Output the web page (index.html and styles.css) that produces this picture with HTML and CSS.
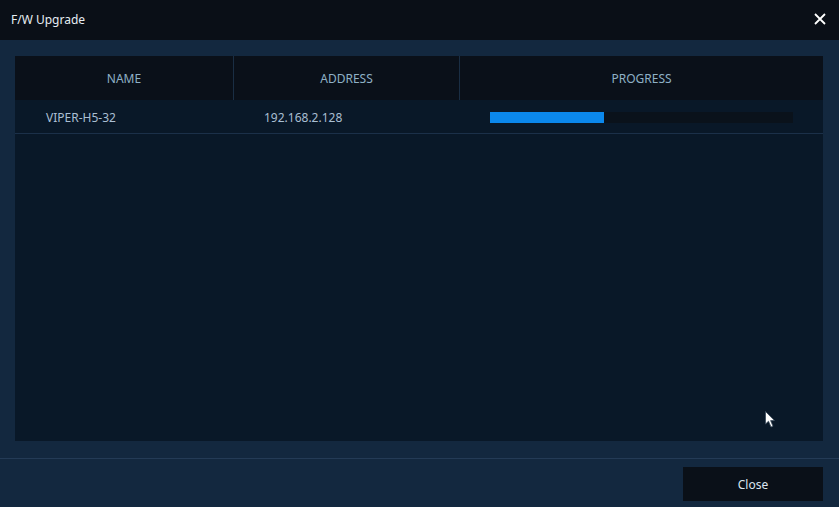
FILE: index.html
```html
<!DOCTYPE html>
<html>
<head>
<meta charset="utf-8">
<link rel="stylesheet" href="styles.css">
</head>
<body>
<div class="dialog">
  <div class="titlebar">
    <span class="title">F/W Upgrade</span>
    <svg class="close-x" width="14" height="14" viewBox="0 0 14 14"><path d="M2 2L12 12M12 2L2 12" stroke="#ffffff" stroke-width="1.8" fill="none"/></svg>
  </div>
  <div class="content">
    <div class="panel">
      <div class="row head">
        <div class="cell c1">NAME</div>
        <div class="cell c2">ADDRESS</div>
        <div class="cell c3">PROGRESS</div>
      </div>
      <div class="row item">
        <div class="cell c1 name">VIPER-H5-32</div>
        <div class="cell c2 addr">192.168.2.128</div>
        <div class="cell c3 prog"><div class="bar"><div class="fill" style="width:37.6%"></div></div></div>
      </div>
    </div>
  </div>
  <div class="footer">
    <button class="btn">Close</button>
  </div>
  <svg class="cursor" width="12" height="18" viewBox="0 0 12 18"><path d="M0.5 0.5L0.5 13L3.5 10.2L6 16L8 15.2L5.6 9.6L9.5 9.6Z" fill="#ffffff" stroke="#3a4a5a" stroke-width="0.8"/></svg>
</div>
</body>
</html>
```
FILE: styles.css
```css
* { box-sizing: border-box; }
html, body { margin: 0; padding: 0; }
body {
  width: 839px;
  height: 507px;
  background: #13283f;
  font-family: "Noto Sans", "Open Sans", sans-serif;
  font-size: 12px;
  overflow: hidden;
}
.dialog {
  position: relative;
  width: 839px;
  height: 507px;
  display: flex;
  flex-direction: column;
  background: #13283f;
}
.titlebar {
  height: 40px;
  background: #0a0f17;
  display: flex;
  align-items: center;
  justify-content: space-between;
  padding: 0 12px 0 11px;
}
.title {
  color: #e6edf3;
  font-size: 12px;
  margin-top: -2px;
}
.close-x { margin-top: -3px; }
.content {
  padding: 16px 16px 0 15px;
  height: 419px;
  border-bottom: 1px solid #243b56;
}
.panel {
  height: 385px;
  background: #091828;
}
.row {
  display: flex;
}
.head {
  height: 44px;
  background: #0a1019;
}
.cell {
  display: flex;
  align-items: center;
}
.head .cell {
  justify-content: center;
  color: #8fb0c6;
}
.head .c1, .head .c2 { border-right: 1px solid #1a2e44; }
.c1 { width: 219px; }
.c2 { width: 226px; }
.c3 { flex: 1; }
.item {
  height: 34px;
  border-bottom: 1px solid #1b3049;
}
.item .cell { color: #a9bfd3; padding-top: 2px; }
.name { padding-left: 31px; }
.addr { padding-left: 30px; }
.prog { padding-left: 30px; }
.bar {
  width: 303px;
  height: 11px;
  background: #0a121b;
  margin-top: -1px;
}
.fill {
  height: 100%;
  background: #0b88ec;
}
.footer {
  flex: 1;
  display: flex;
  justify-content: flex-end;
  padding: 8px 16px 0 0;
}
.btn {
  width: 140px;
  height: 34px;
  background: #0a1018;
  border: none;
  color: #dbe6f0;
  font-family: "Noto Sans", "Open Sans", sans-serif;
  font-size: 12px;
  padding: 0;
}
.cursor {
  position: absolute;
  left: 765px;
  top: 411px;
}
```
